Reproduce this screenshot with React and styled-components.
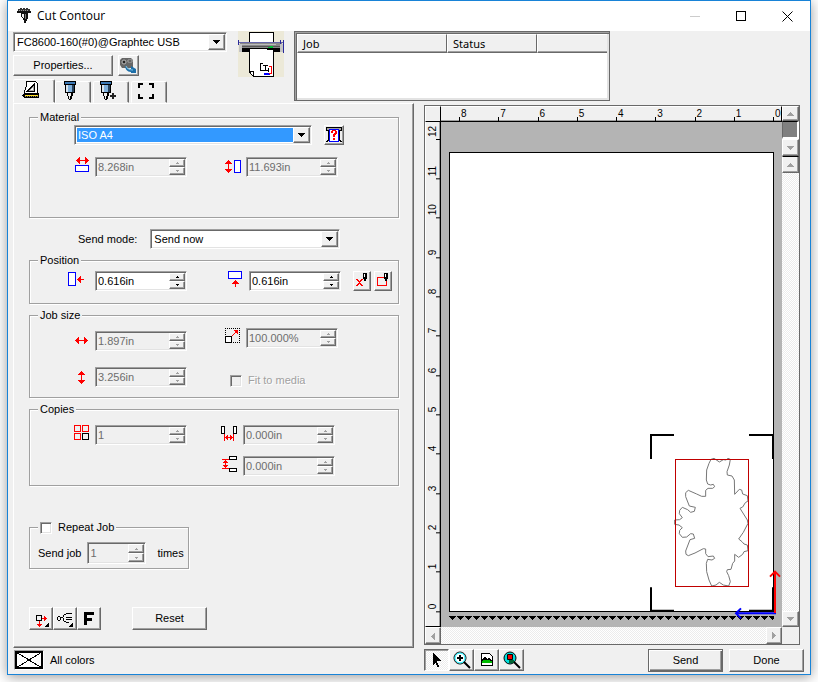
import React from "react";
import { useState } from "react";
import styled, { createGlobalStyle, css } from "styled-components";

const GlobalStyle = createGlobalStyle`
  * {
    box-sizing: border-box;
  }
  body {
    margin: 0;
    background-color: #fff;
  }
  body, button, input, select, table {
    font-family: "Liberation Sans", Arial, sans-serif;
    font-size: 11px;
    line-height: 13px;
    color: #000;
  }
  button, input, select {
    margin: 0;
    padding: 0;
    border-radius: 0;
  }
  svg {
    display: block;
    flex-shrink: 0;
  }
`;

const raised = css`
  background-color: #f0f0f0;
  border: 1px solid;
  border-color: #fff #696969 #696969 #fff;
  box-shadow: inset -1px -1px #a0a0a0;
`;
const sunken = css`
  border: 1px solid;
  border-color: #a0a0a0 #fff #fff #a0a0a0;
  box-shadow: inset 1px 1px #696969, inset -1px -1px #e3e3e3;
`;
const dither = css`
  background: repeating-conic-gradient(#fff 0 25%, #ececec 0 50%) 0 0 / 2px 2px;
`;

const Desktop = styled.div`
  display: flex;
  min-height: 100vh;
  padding: 0 7px 7px;
`;
const Window = styled.main`
  flex: 1;
  display: flex;
  flex-direction: column;
  background-color: #f0f0f0;
  border: 1px solid #1883d7;
  box-shadow: 0 2px 12px rgba(0, 0, 0, 0.4);
`;
const TitleBar = styled.header`
  display: flex;
  align-items: center;
  height: 30px;
  padding-left: 9px;
  background-color: #fff;
`;
const Title = styled.h1`
  flex: 1;
  margin: 0 0 0 5px;
  font: 12px/16px "Open Sans", "Noto Sans", sans-serif;
`;
const CaptionButton = styled.button`
  display: flex;
  align-items: center;
  justify-content: center;
  width: 46px;
  height: 30px;
  border: none;
  background: none;
`;

const Header = styled.section`
  display: flex;
  padding-left: 5px;
`;
const DeviceColumn = styled.div`
  display: flex;
  flex-direction: column;
  width: 214px;
  padding-top: 1px;
`;
const DeviceButtons = styled.div`
  display: flex;
  gap: 5px;
  margin: 3px 0;
`;
const PlotterBox = styled.div`
  margin: 0 10px 0 11px;
`;
const JobList = styled.div`
  width: 316px;
  height: 70px;
  padding: 2px;
  background-color: #fff;
  border: 1px solid #696969;
  box-shadow: inset 1px 1px #a0a0a0, inset 2px 2px #696969,
    inset -2px -2px #e3e3e3;
`;
const JobTable = styled.table`
  width: 100%;
  border-collapse: separate;
  border-spacing: 0;
  table-layout: fixed;
  th {
    height: 19px;
    padding: 0 5px;
    font: 11px/15px "Noto Sans", "Open Sans", sans-serif;
    text-align: left;
    background-color: #f0f0f0;
    border: 1px solid;
    border-color: #fff #696969 #696969 #fff;
    box-shadow: inset 0 -1px #a0a0a0;
  }
  th:last-child {
    border-right: none;
  }
`;

const Combo = styled.div`
  display: grid;
  grid-template-columns: 1fr 17px;
  width: ${(props) => props.$width}px;
  height: 20px;
  padding: 1px;
  background-color: #fff;
  ${sunken}
  select {
    grid-area: 1 / 1 / 2 / 3;
    appearance: none;
    padding-left: 1px;
    border: 1px solid #fff;
    outline: none;
    background-color: ${(props) => (props.$active ? "#3399ff" : "#fff")};
    color: ${(props) => (props.$active ? "#fff" : "#000")};
  }
`;
const ComboArrow = styled.span`
  grid-area: 1 / 2;
  display: flex;
  align-items: center;
  justify-content: center;
  pointer-events: none;
  ${raised}
`;

const Button = styled.button`
  width: ${(props) => props.$width || 75}px;
  height: ${(props) => props.$height || 23}px;
  ${raised}
  ${(props) =>
    props.$default &&
    css`
      border-color: #696969;
      box-shadow: inset 1px 1px #fff, inset -1px -1px #696969,
        inset -2px -2px #a0a0a0;
    `}
`;
const IconButton = styled(Button)`
  display: flex;
  align-items: center;
  justify-content: center;
  ${(props) =>
    props.$pressed &&
    css`
      border-color: #696969 #fff #fff #696969;
      box-shadow: inset 1px 1px #a0a0a0;
      ${dither}
    `}
`;

const TabList = styled.div`
  display: flex;
  align-items: flex-end;
  gap: 2px;
`;
const Tab = styled.button`
  display: flex;
  align-items: center;
  justify-content: center;
  width: ${(props) => (props.$active ? 42 : 36)}px;
  height: ${(props) => (props.$active ? 24 : 22)}px;
  margin-right: ${(props) => (props.$active ? -2 : 0)}px;
  padding: 0 6px 2px 0;
  background-color: #f0f0f0;
  border: 1px solid;
  border-color: #fff #696969 transparent #fff;
  border-radius: 2px 2px 0 0;
  box-shadow: inset -1px 0 #a0a0a0;
`;

const Main = styled.div`
  flex: 1;
  display: flex;
  gap: 10px;
  padding: 0 10px 0 5px;
`;
const Panel = styled.form`
  width: 401px;
  margin: 0;
  padding: 7px 14px 17px 15px;
  border: 1px solid;
  border-color: #fff #696969 #696969 #fff;
  box-shadow: inset -1px -1px #a0a0a0;
`;
const Group = styled.fieldset`
  min-width: 0;
  width: ${(props) => (props.$width ? `${props.$width}px` : "auto")};
  margin: ${(props) => props.$top || 0}px 0 0;
  padding: ${(props) => props.$pad};
  border: 1px solid #a0a0a0;
  box-shadow: 1px 1px #fff, inset 1px 1px #fff;
  legend {
    margin-left: 8px;
    padding: 0 2px;
    background-color: #f0f0f0;
  }
`;
const Columns = styled.div`
  display: grid;
  grid-template-columns: 157px ${(props) => props.$second || 151}px auto;
  align-items: start;
`;
const Column = styled.div`
  display: flex;
  flex-direction: column;
  align-items: flex-end;
  gap: ${(props) => props.$gap || 0}px;
  padding-top: ${(props) => props.$top || 0}px;
`;
const Field = styled.label`
  display: flex;
  align-items: center;
  gap: ${(props) => props.$gap || 5}px;
`;
const MediaRow = styled.div`
  display: flex;
  gap: 12px;
  padding-left: 44px;
  margin-bottom: 12px;
`;
const PenButtons = styled.div`
  display: flex;
  gap: 3px;
  padding-left: 12px;
`;
const SendMode = styled.label`
  display: flex;
  align-items: center;
  gap: 13px;
  margin: 11px 0 0 49px;
`;

const SpinBox = styled.span`
  display: flex;
  width: ${(props) => props.$width || 92}px;
  height: ${(props) => (props.$tall ? 22 : 20)}px;
  padding: 1px;
  background-color: ${(props) => (props.$disabled ? "#f0f0f0" : "#fff")};
  ${sunken}
  input {
    flex: 1;
    min-width: 0;
    padding-left: 1px;
    border: none;
    outline: none;
    background: none;
  }
  input:disabled {
    color: #6d6d6d;
  }
`;
const SpinButtons = styled.span`
  display: flex;
  flex-direction: column;
  width: 16px;
  button {
    flex: 1;
    display: flex;
    align-items: center;
    justify-content: center;
    ${raised}
  }
`;

const Check = styled.label`
  display: flex;
  align-items: center;
  gap: 6px;
  color: ${(props) => (props.$disabled ? "#a0a0a0" : "#000")};
  text-shadow: ${(props) => (props.$disabled ? "1px 1px #fff" : "none")};
  input {
    appearance: none;
    width: 12px;
    height: 12px;
    background-color: ${(props) => (props.$disabled ? "#f0f0f0" : "#fff")};
    ${sunken}
  }
  input:checked {
    background-image: linear-gradient(#000, #000);
    background-size: 4px 4px;
    background-position: center;
    background-repeat: no-repeat;
  }
`;
const FitRow = styled.div`
  align-self: stretch;
  padding: 10px 0 0 43px;
`;
const RepeatRow = styled.label`
  display: flex;
  align-items: center;
  gap: 6px;
  padding-left: 8px;
  span:last-child {
    margin-left: 5px;
  }
`;
const ActionRow = styled.div`
  display: flex;
  margin-top: 38px;
  button:last-child {
    margin-left: 31px;
  }
`;

const Preview = styled.section`
  flex: 1;
  display: grid;
  grid-template-columns: 16px 1fr 17px;
  grid-template-rows: 16px 1fr 17px;
  margin: 2px 0 3px;
  border: 1px solid #696969;
`;
const Corner = styled.div`
  border: 1px solid;
  border-color: #fff #000 #000 #fff;
`;
const HRuler = styled.div`
  display: flex;
  padding-left: 18px;
  font-size: 10px;
  border-top: 1px solid #fff;
  border-bottom: 1px solid #000;
  border-right: 1px solid #000;
  box-shadow: inset 0 -1px #a0a0a0;
`;
const HMark = styled.span`
  flex: ${(props) => (props.$last ? "0 0 8px" : 1)};
  padding-left: 2px;
  line-height: 14px;
  background: linear-gradient(#000, #000) 0 100% / 1px 4px no-repeat;
`;
const VRuler = styled.div`
  display: flex;
  flex-direction: column;
  padding-bottom: 14px;
  font-size: 10px;
  border-left: 1px solid #fff;
  border-bottom: 1px solid #000;
  border-right: 1px solid #000;
  box-shadow: inset -1px 0 #a0a0a0;
`;
const VMark = styled.span`
  flex: ${(props) => (props.$first ? "0 0 18px" : 1)};
  padding-top: 3px;
  line-height: 14px;
  writing-mode: vertical-rl;
  transform: rotate(180deg);
  background: linear-gradient(#000, #000) 0 0 / 4px 1px no-repeat;
`;
const Canvas = styled.div`
  position: relative;
  display: flex;
  flex-direction: column;
  padding: 30px 8px 7px;
  background-color: #b4b4b4;
`;
const Paper = styled.div`
  flex: 1;
  margin-bottom: 4px;
  background-color: #fff;
  border: 1px solid #000;
`;
const Design = styled.svg`
  position: absolute;
  right: 0;
  bottom: 5px;
`;
const VScroll = styled.div`
  grid-row: 1 / 3;
  grid-column: 3;
  display: flex;
  flex-direction: column;
`;
const HScroll = styled.div`
  grid-column: 1 / 3;
  display: flex;
`;
const Track = styled.div`
  flex: 1;
  ${dither}
`;
const Splitter = styled.div`
  height: 18px;
  background-color: #808080;
  border: 1px solid;
  border-color: #000 #fff #fff #696969;
  border-bottom-width: 2px;
  border-right-width: 2px;
`;
const ScrollEnd = styled(Button)`
  display: flex;
  align-items: center;
  justify-content: center;
  flex-shrink: 0;
  ${(props) => props.$ruled && "border-top-color: #000;"}
`;

const Footer = styled.footer`
  display: flex;
  align-items: center;
  gap: 6px;
  height: 26px;
  padding: 0 6px 2px;
`;
const ColorFilter = styled.div`
  display: flex;
  align-items: center;
  gap: 6px;
  flex: 0 0 404px;
`;
const Swatch = styled.span`
  ${sunken}
`;
const Tools = styled.div`
  flex: 1;
  display: flex;
`;

const Glyph = ({ w = 16, h = 16, children, ...rest }) => (
  <svg
    width={w}
    height={h}
    viewBox={`0 0 ${w} ${h}`}
    fill="none"
    shapeRendering="crispEdges"
    aria-hidden="true"
    {...rest}
  >
    {children}
  </svg>
);

const arrows = {
  down: "M0 0h7v1h-1v1h-1v1h-1v1h-1v-1h-1v-1h-1v-1h-1z",
  up: "M3 0h1v1h1v1h1v1h1v1h-7v-1h1v-1h1v-1h1z",
};
const turns = { left: "rotate(-90 4 4)", right: "rotate(90 4 4)" };
const ScrollArrow = ({ dir }) => (
  <Glyph w={8} h={8}>
    <g transform={turns[dir]}>
      <path
        d={arrows[dir] || arrows.up}
        transform="translate(0 2)"
        fill="#a0a0a0"
      />
    </g>
  </Glyph>
);
const TinyArrow = ({ up, color }) => (
  <Glyph w={3} h={2}>
    <path d={up ? "M1 0h1v1h1v1h-3v-1h1z" : "M0 0h3v1h-1v1h-1v-1h-1z"} fill={color} />
  </Glyph>
);

// double arrows, 13px long
const ARROW_H =
  "M0 3h1v-1h1v-1h1v-1h1v3h5v-3h1v1h1v1h1v1h1v1h-1v1h-1v1h-1v1h-1v-3h-5v3h-1v-1h-1v-1h-1v-1h-1z";
const ARROW_V =
  "M3 0h1v1h1v1h1v1h1v1h-3v5h3v1h-1v1h-1v1h-1v1h-1v-1h-1v-1h-1v-1h-1v-1h3v-5h-3v-1h1v-1h1v-1h1z";

const MediaWidthIcon = () => (
  <Glyph w={15} h={20}>
    <path d={ARROW_H} fill="#f00" transform="translate(1 0)" />
    <path d="M.5 8.500h13v6h-13z" fill="#fff" stroke="#00f" />
  </Glyph>
);
const MediaHeightIcon = () => (
  <Glyph w={16} h={14}>
    <path d={ARROW_V} fill="#f00" />
    <path d="M9.500.5h6v12h-6z" fill="#fff" stroke="#00f" />
  </Glyph>
);
const OffsetXIcon = () => (
  <Glyph w={17} h={18}>
    <path d="M.5.5h7v13h-7z" fill="#fff" stroke="#00f" />
    <path d="M9 7h1v-1h1v-1h1v-1h1v3h3v1h-3v3h-1v-1h-1v-1h-1v-1h-1z" fill="#f00" />
  </Glyph>
);
const OffsetYIcon = () => (
  <Glyph w={15} h={20}>
    <path d="M.5.5h13v7h-13z" fill="#fff" stroke="#00f" />
    <path d="M7 9h1v1h1v1h1v1h1v1h-3v3h-1v-3h-3v-1h1v-1h1v-1h1z" fill="#f00" />
  </Glyph>
);
const SizeXIcon = () => (
  <Glyph w={14} h={8}>
    <path d={ARROW_H} fill="#f00" />
  </Glyph>
);
const SizeYIcon = () => (
  <Glyph w={11} h={13}>
    <path d={ARROW_V} fill="#f00" />
  </Glyph>
);
const ScaleIcon = () => (
  <Glyph w={15} h={20}>
    <path d="M0 .5h15M14.500 0v15M15 14.500h-8M.5 0v8" stroke="#000" strokeDasharray="1 1" />
    <path d="M.5 8.500h6v6h-6z" fill="#fff" stroke="#000" />
    <path d="M7 7h1v1h-1zM8 6h1v1h-1zM9 5h1v1h-1zM10 4h1v1h-1z" fill="#f00" />
    <path d="M9 2h4v4h-1v-1h-1v-1h-1v-1h-1z" fill="#f00" />
  </Glyph>
);
const CopiesIcon = () => (
  <Glyph w={16} h={20}>
    <path d="M.5.5h6v6h-6zM8.500.5h6v6h-6zM.5 8.500h6v6h-6z" stroke="#f00" />
    <path d="M8.500 8.500h6v6h-6z" stroke="#000" />
  </Glyph>
);
const GapXIcon = () => (
  <Glyph w={17} h={18}>
    <path d="M.5.5h3v7h-3zM12.500.5h3v7h-3z" fill="#fff" stroke="#000" />
    <path d="M3.500 8v7M12.500 8v7M5 11.500h7" stroke="#f00" />
    <path d="M4 11h1v-1h1v-1h1v5h-1v-1h-1v-1h-1zM12 11h-1v-1h-1v-1h-1v5h1v-1h1v-1h1z" fill="#f00" />
  </Glyph>
);
const GapYIcon = () => (
  <Glyph w={16} h={20}>
    <path d="M7.500.5h7v3h-7zM7.500 12.500h7v3h-7z" fill="#fff" stroke="#000" />
    <path d="M0 3.500h7M0 12.500h7M3.500 5v7" stroke="#f00" />
    <path d="M3 4h1v1h1v1h1v1h-5v-1h1v-1h1zM3 12h1v-1h1v-1h1v-1h-5v1h1v1h1z" fill="#f00" />
  </Glyph>
);
const MediaQueryIcon = () => (
  <Glyph w={16} h={16}>
    <path d="M0 .5h16M0 3.500h16M.5 0v4M15.500 0v4M2.500 4v9l-2 2M13.500 4v9l2 2" stroke="#000" />
    <path d="M1 1h14v2h-14z" fill="#a0a0a0" />
    <path d="M3.500 2.500h9v12h-9z" fill="#fff" stroke="#00f" />
    <path d="M5 4h1v-1h4v1h1v3h-1v1h-1v2h-2v-3h1v-1h1v-2h-2v2h-2zM7 11h2v2h-2z" fill="#f00" />
  </Glyph>
);
const PenHead = () => (
  <>
    <path d="M8 0h4v6h-1v2h-2v-2h-1z" fill="#000" />
    <path d="M9.500 1v3" stroke="#fff" />
  </>
);
const PenClearIcon = () => (
  <Glyph w={14} h={16}>
    <path
      d="M1 6h2v1h1v1h1v-1h1v-1h2v1h-1v1h-1v1h-1v1h1v1h1v1h1v1h-2v-1h-1v-1h-1v1h-1v1h-2v-1h1v-1h1v-1h1v-1h-1v-1h-1v-1h-1z"
      fill="#f00"
    />
    <PenHead />
  </Glyph>
);
const PenAreaIcon = () => (
  <Glyph w={14} h={16}>
    <path d="M1.500 4.500h9v8h-9z" stroke="#f00" />
    <PenHead />
  </Glyph>
);
const BladeIcon = () => (
  <Glyph w={15} h={16}>
    <path d="M1 1h2v-1h2v1h1v-1h2v1h1v-1h2v1h2v3h-12z" fill="#333" />
    <path d="M2 2.500h10" stroke="#999" strokeDasharray="1 1" />
    <path d="M0 3h14v2h-3v6h-1v2h-1v2h-2v-3h-1v-2h-1v-1h-1v-4h-4z" fill="#111" />
    <path d="M5 6h2v4h-1v-1h-1z" fill="#eee" />
    <path d="M8 6h1v5h-1z" fill="#777" />
  </Glyph>
);
const RefreshDeviceIcon = () => (
  <Glyph w={17} h={17} shapeRendering="auto">
    <path d="M0 3l2-2h9l2 2v8h-11l-2-3z" fill="#666" />
    <circle cx="4" cy="5" r="2" fill="#222" stroke="#bbb" />
    <path d="M8 3h4v2h-4z" fill="#222" stroke="#aaa" />
    <path d="M5 8c1 3 3 4 6 4v-3l5 3v4h-5v-1c-4 0-6-3-6-7z" fill="#1d6fa8" />
    <path d="M6 9c1 3 4 4 7 4" stroke="#7cc4e8" strokeWidth="1" />
  </Glyph>
);
const TabMaterialIcon = () => (
  <Glyph w={18} h={18}>
    <path d="M5 0h9l2 2v11h-13l2-7z" fill="#fff" />
    <path d="M5 .5h9M14.500 1v1M15.500 2v11M4.500 0v6M3.500 6v3M2.500 9v3" stroke="#000" />
    <path d="M13 2v9h-9v-1h1v-1h1v-1h1v-1h1v-1h1v-1h1v-1h1v-1h1v-1z" fill="#000" />
    <path d="M12 5v5h-5v-1h1v-1h1v-1h1v-1h1v-1z" fill="#aaa" />
    <path d="M9 9h2v-2h-1v1h-1z" fill="#fff" />
    <path d="M0 14h1v-1h1v-1h15v5h-15v-1h-1v-1h-1z" fill="#000" />
    <path d="M3 14.500h13" stroke="#fd2" strokeWidth="1" />
    <path d="M3 15.500h13" stroke="#886" strokeDasharray="1 1" />
  </Glyph>
);
const PenShape = () => (
  <>
    <path d="M0 0h12v4h-1v8h-2v3h-1v3h-1v1h-2v-1h-1v-3h-1v-3h-2v-8h-1z" fill="#000" />
    <path d="M1 1h10v2h-10z" fill="#3b78b5" />
    <path d="M2 4h2v7h-2z" fill="#d8e4ee" />
    <path d="M4 4h4v7h-4z" fill="#7fb0dc" />
    <path d="M8 4h2v7h-2z" fill="#27415a" />
    <path d="M4 12h3v3h-1v3h-1v-3h-1z" fill="#eee" />
  </>
);
const TabPenIcon = () => (
  <Glyph w={13} h={20}>
    <PenShape />
  </Glyph>
);
const TabPenAddIcon = () => (
  <Glyph w={17} h={20}>
    <PenShape />
    <path d="M10 14.500h6M13 12v6" stroke="#222" strokeWidth="2" />
  </Glyph>
);
const TabMarksIcon = () => (
  <Glyph w={16} h={16}>
    <path d="M1 5v-4h4M11 1h4v4M15 11v4h-4M5 15h-4v-4" stroke="#000" strokeWidth="2" />
  </Glyph>
);
const PlotterIcon = () => (
  <Glyph w={46} h={46}>
    <path d="M0 0h46v46h-46z" fill="#ece9d8" />
    <path d="M11.500 1.500h24v10h-24z" fill="#fff" stroke="#000" />
    <path d="M3 17h41v4h-41z" fill="#000" />
    <path d="M2 11h42v6h-42z" fill="#888" />
    <path d="M4 13.500h34" stroke="#bbb" />
    <path d="M4 15.500h38" stroke="#555" />
    <path d="M0 11.500h46" stroke="#66a" />
    <path d="M1 13h3v8h-3zM42 13h3v8h-3z" fill="#c4c4c4" />
    <path d="M.5 9v5M45.500 9v13M42.500 9v4" stroke="#2a2a9a" />
    <path d="M30 16.500h5M32 15.500h3" stroke="#0b3" />
    <path d="M11 18h25v28h-21l-4-4z" fill="#fff" />
    <path d="M11.500 18v23l4 4.500h20v-27.500M11.500 40.500h4v5" stroke="#000" />
    <path d="M29 18.500h6" stroke="#000" />
    <path d="M22.500 32v8M22 32.500h3M25 34.500h5M27.500 34v5M22 39.500h9M30.500 37v4" stroke="#000" />
    <path d="M26 43h6" stroke="#00f" strokeWidth="2" />
    <path d="M33.500 35v8M31 35.500h3M31 42.500h2" stroke="#f00" />
  </Glyph>
);
const MenuMark = () => <path d="M17 14v4h-4v-1h1v-1h1v-1h1v-1z" fill="#000" />;
const OriginIcon = () => (
  <Glyph w={18} h={20}>
    <path d="M4.500 6.500h5v5h-5z" stroke="#000" />
    <path d="M10 9.500h3M7.500 12v3" stroke="#f00" />
    <path d="M12 7h1v1h1v1h1v1h-1v1h-1v1h-1zM5 15h5v1h-1v1h-1v1h-1v-1h-1v-1h-1z" fill="#f00" />
    <MenuMark />
  </Glyph>
);
const OrderIcon = () => (
  <Glyph w={18} h={20}>
    <path
      d="M1 8h1v-1h2v1h1v3h-1v1h-2v-1h-1zM2 8v3h2v-3z"
      fill="#000"
      fillRule="evenodd"
    />
    <path d="M5 8.500h2M7.500 8v-2M8 5.500h2M10 4.500h6M10 8.500h6M7.500 9v3M8 12.500h2M10 13.500h3M10 10.500h6" stroke="#000" />
    <MenuMark />
  </Glyph>
);
const FlipIcon = () => (
  <Glyph w={10} h={14}>
    <path d="M1.500 13v-12M0 1.500h10M0 7h8" stroke="#000" strokeWidth="3" />
  </Glyph>
);
const NoColorIcon = () => (
  <Glyph w={28} h={18}>
    <path d="M1 1h26v16h-26z" fill="#fff" stroke="#000" strokeWidth="2" />
    <path d="M1 1l26 16M27 1l-26 16" stroke="#000" />
  </Glyph>
);
const PointerIcon = () => (
  <Glyph w={12} h={16}>
    <path
      d="M2 1h1v1h1v1h1v1h1v1h1v1h1v1h1v1h1v1h-4v2h1v2h1v2h-2v-2h-1v-2h-1v1h-1v1h-1z"
      fill="#000"
    />
  </Glyph>
);
const ZoomInIcon = () => (
  <Glyph w={18} h={18} shapeRendering="auto">
    <circle cx="7" cy="7" r="6" fill="#fff" stroke="#000" />
    <circle cx="7" cy="7" r="5" stroke="#0ef" strokeWidth="1" />
    <path d="M4 7h6M7 4v6M11 11l6 6" stroke="#000" strokeWidth="2" />
  </Glyph>
);
const FitPageIcon = () => (
  <Glyph w={14} h={16}>
    <path d="M1.500 1.500h8l3 3v9h-11z" fill="#fff" stroke="#000" />
    <path d="M2 8h10v3h-10z" fill="#0b0" />
    <path d="M2 7h1v-1h1v-1h2v1h1v1h1v-1h2v1h1v1h1v1h-2v-1h-7v1h-1z" fill="#000" />
  </Glyph>
);
const ZoomDesignIcon = () => (
  <Glyph w={18} h={18} shapeRendering="auto">
    <circle cx="7" cy="7" r="6" fill="#0dd" stroke="#000" />
    <path d="M4.500 3.500h5v5h-5z" fill="#e00" stroke="#000" />
    <path d="M6 9h5v3h-5z" fill="#063" />
    <path d="M11 11l6 6" stroke="#000" strokeWidth="2" />
  </Glyph>
);

const Spinner = ({ value, disabled, width, tall, label }) => {
  const [text, setText] = useState(value);
  const color = disabled ? "#a0a0a0" : "#000";
  const step = (delta) => {
    const unit = text.replace(/[\d.]/g, "");
    const digits = (text.split(".")[1] || "").replace(/\D/g, "").length;
    setText((parseFloat(text) + delta).toFixed(digits) + unit);
  };
  return (
    <SpinBox $disabled={disabled} $width={width} $tall={tall}>
      <input
        aria-label={label}
        value={text}
        disabled={disabled}
        onChange={(e) => setText(e.target.value)}
      />
      <SpinButtons>
        <button
          type="button"
          disabled={disabled}
          aria-label={`${label} up`}
          onClick={() => step(0.1)}
        >
          <TinyArrow up color={color} />
        </button>
        <button
          type="button"
          disabled={disabled}
          aria-label={`${label} down`}
          onClick={() => step(-0.1)}
        >
          <TinyArrow color={color} />
        </button>
      </SpinButtons>
    </SpinBox>
  );
};

const ComboBox = ({ value, width, active, label }) => (
  <Combo $width={width} $active={active}>
    <select aria-label={label} defaultValue={value}>
      <option>{value}</option>
    </select>
    <ComboArrow>
      <Glyph w={7} h={4}>
        <path d={arrows.down} fill="#000" />
      </Glyph>
    </ComboArrow>
  </Combo>
);

const tabs = [
  { name: "Material", icon: <TabMaterialIcon /> },
  { name: "Tool", icon: <TabPenIcon /> },
  { name: "Tool options", icon: <TabPenAddIcon /> },
  { name: "Registration marks", icon: <TabMarksIcon /> },
];

const DeviceHeader = () => {
  const [tab, setTab] = useState(0);
  return (
    <Header>
      <DeviceColumn>
        <ComboBox label="Device" value="FC8600-160(#0)@Graphtec USB" width={214} />
        <DeviceButtons>
          <Button type="button" $width={100} $height={21}>
            Properties...
          </Button>
          <IconButton type="button" aria-label="Refresh device" $width={21} $height={21}>
            <RefreshDeviceIcon />
          </IconButton>
        </DeviceButtons>
        <TabList role="tablist">
          {tabs.map((item, index) => (
            <Tab
              key={item.name}
              type="button"
              role="tab"
              aria-label={item.name}
              aria-selected={index === tab}
              $active={index === tab}
              onClick={() => setTab(index)}
            >
              {item.icon}
            </Tab>
          ))}
        </TabList>
      </DeviceColumn>
      <PlotterBox>
        <PlotterIcon />
      </PlotterBox>
      <JobList>
        <JobTable>
          <colgroup>
            <col width="150" />
            <col width="90" />
            <col />
          </colgroup>
          <thead>
            <tr>
              <th>Job</th>
              <th>Status</th>
              <th></th>
            </tr>
          </thead>
        </JobTable>
      </JobList>
    </Header>
  );
};

const Settings = () => (
  <Panel onSubmit={(e) => e.preventDefault()}>
    <Group $pad="1px 0 40px">
      <legend>Material</legend>
      <MediaRow>
        <ComboBox label="Material" value="ISO A4" width={238} active />
        <IconButton type="button" aria-label="Query media" $width={20} $height={20}>
          <MediaQueryIcon />
        </IconButton>
      </MediaRow>
      <Columns>
        <Column>
          <Field>
            <MediaWidthIcon />
            <Spinner label="Media width" value="8.268in" disabled />
          </Field>
        </Column>
        <Column>
          <Field>
            <MediaHeightIcon />
            <Spinner label="Media height" value="11.693in" disabled />
          </Field>
        </Column>
      </Columns>
    </Group>
    <SendMode>
      Send mode:
      <ComboBox label="Send mode" value="Send now" width={190} />
    </SendMode>
    <Group $top={5} $pad="4px 0 12px">
      <legend>Position</legend>
      <Columns $second={154}>
        <Column>
          <Field $gap={10}>
            <OffsetXIcon />
            <Spinner label="Position x" value="0.616in" />
          </Field>
        </Column>
        <Column>
          <Field $gap={6}>
            <OffsetYIcon />
            <Spinner label="Position y" value="0.616in" />
          </Field>
        </Column>
        <PenButtons>
          <IconButton type="button" aria-label="Clear origin" $width={18} $height={20}>
            <PenClearIcon />
          </IconButton>
          <IconButton type="button" aria-label="Trace area" $width={18} $height={20}>
            <PenAreaIcon />
          </IconButton>
        </PenButtons>
      </Columns>
    </Group>
    <Group $top={5} $pad="6px 0 10px">
      <legend>Job size</legend>
      <Columns>
        <Column $gap={16} $top={3}>
          <Field $gap={6}>
            <SizeXIcon />
            <Spinner label="Job width" value="1.897in" disabled />
          </Field>
          <Field $gap={6}>
            <SizeYIcon />
            <Spinner label="Job height" value="3.256in" disabled />
          </Field>
        </Column>
        <Column $gap={16}>
          <Field $gap={6}>
            <ScaleIcon />
            <Spinner label="Scale" value="100.000%" disabled />
          </Field>
          <FitRow>
            <Check $disabled>
              <input type="checkbox" disabled />
              Fit to media
            </Check>
          </FitRow>
        </Column>
      </Columns>
    </Group>
    <Group $top={5} $pad="9px 0 9px">
      <legend>Copies</legend>
      <Columns $second={148}>
        <Column>
          <Field>
            <CopiesIcon />
            <Spinner label="Copies" value="1" disabled />
          </Field>
        </Column>
        <Column $gap={11}>
          <Field>
            <GapXIcon />
            <Spinner label="Horizontal gap" value="0.000in" disabled />
          </Field>
          <Field>
            <GapYIcon />
            <Spinner label="Vertical gap" value="0.000in" disabled />
          </Field>
        </Column>
      </Columns>
    </Group>
    <Group $top={35} $width={160} $pad="8px 0 4px">
      <legend>
        <Check>
          <input type="checkbox" />
          Repeat Job
        </Check>
      </legend>
      <RepeatRow>
        <span>Send job</span>
        <Spinner label="Send job times" value="1" width={59} tall disabled />
        <span>times</span>
      </RepeatRow>
    </Group>
    <ActionRow>
      <IconButton type="button" aria-label="Origin" $width={24}>
        <OriginIcon />
      </IconButton>
      <IconButton type="button" aria-label="Cutting order" $width={24}>
        <OrderIcon />
      </IconButton>
      <IconButton type="button" aria-label="Orientation" $width={24}>
        <FlipIcon />
      </IconButton>
      <Button type="reset">Reset</Button>
    </ActionRow>
  </Panel>
);

const horizontalMarks = [8, 7, 6, 5, 4, 3, 2, 1, 0];
const verticalMarks = [12, 11, 10, 9, 8, 7, 6, 5, 4, 3, 2, 1, 0];

const CONTOUR =
  "M213 103L207 115 200 135 199 165 203 177 212 180 220 178 224 185 218 190 204 190 197 196 197 214 185 214 170 207 145 196 137 203 137 215 148 243 166 247 163 259 152 262 143 254 127 247 119 256 118 266 127 278 119 284 104 285 104 298 117 300 127 308 119 316 118 326 127 337 140 336 152 326 160 327 164 340 150 344 137 378 138 388 145 392 165 384 190 371 197 372 197 386 204 395 220 393 224 400 216 405 203 403 199 415 200 440 207 465 215 483 228 480 238 472 250 480 266 483 271 470 266 452 260 440 262 434 273 433 278 415 284 408 284 388 296 397 308 388 312 380 324 377 322 360 312 357 306 350 296 342 310 322 324 295 322 285 300 250 308 246 316 233 324 228 322 212 308 207 305 195 298 193 284 208 283 165 276 153 262 150 261 140 268 120 271 103 264 100 258 105 250 104 238 111 228 104 222 100z";

const CutPreview = () => (
  <Preview aria-label="Preview">
    <Corner />
    <HRuler>
      {horizontalMarks.map((mark) => (
        <HMark key={mark} $last={mark === 0}>
          {mark}
        </HMark>
      ))}
    </HRuler>
    <VRuler>
      {verticalMarks.map((mark) => (
        <VMark key={mark} $first={mark === 12}>
          {mark}
        </VMark>
      ))}
    </VRuler>
    <Canvas>
      <Paper />
      <svg width="100%" height="4" shapeRendering="crispEdges" aria-hidden="true">
        <pattern id="feed" width="8" height="4" patternUnits="userSpaceOnUse">
          <path d="M0 0h7v1h-1v1h-1v1h-1v1h-1v-1h-1v-1h-1v-1h-1z" fill="#000" />
        </pattern>
        <rect width="100%" height="4" fill="url(#feed)" />
      </svg>
      <Design width="132" height="192" viewBox="30 15 396 576" fill="none" aria-hidden="true">
        <path
          d="M33 102V30H102M327 30H399V102M33 487V557H102M327 557H399V487"
          stroke="#000"
          strokeWidth="6"
        />
        <path d={CONTOUR} stroke="#777" strokeWidth="3" />
        <path
          d="M106.500 103.500h219v381h-219z"
          stroke="#c00000"
          strokeWidth="3"
          shapeRendering="crispEdges"
        />
        <path d="M408 565H288M303 550L288 565 303 580" stroke="#00f" strokeWidth="6" />
        <path d="M405 564V440M390 455L405 440 420 455" stroke="#f00" strokeWidth="6" />
      </Design>
    </Canvas>
    <VScroll>
      <ScrollEnd type="button" aria-label="Split up" $width={17} $height={15}>
        <ScrollArrow dir="up" />
      </ScrollEnd>
      <Splitter />
      <ScrollEnd type="button" aria-label="Split down" $width={17} $height={17}>
        <ScrollArrow dir="down" />
      </ScrollEnd>
      <ScrollEnd type="button" aria-label="Scroll up" $width={17} $height={17} $ruled>
        <ScrollArrow dir="up" />
      </ScrollEnd>
      <Track />
      <ScrollEnd type="button" aria-label="Scroll down" $width={17} $height={16}>
        <ScrollArrow dir="down" />
      </ScrollEnd>
    </VScroll>
    <HScroll>
      <ScrollEnd type="button" aria-label="Scroll left" $width={16} $height={17}>
        <ScrollArrow dir="left" />
      </ScrollEnd>
      <Track />
      <ScrollEnd type="button" aria-label="Scroll right" $width={16} $height={17}>
        <ScrollArrow dir="right" />
      </ScrollEnd>
    </HScroll>
  </Preview>
);

const App = () => {
  const [tool, setTool] = useState("select");
  const tools = [
    { name: "select", icon: <PointerIcon /> },
    { name: "zoom in", icon: <ZoomInIcon /> },
    { name: "fit page", icon: <FitPageIcon /> },
    { name: "zoom to design", icon: <ZoomDesignIcon /> },
  ];
  return (
    <Desktop>
      <GlobalStyle />
      <Window>
        <TitleBar>
          <BladeIcon />
          <Title>Cut Contour</Title>
          <CaptionButton type="button" aria-label="Minimize" disabled>
            <Glyph w={11} h={11}>
              <path d="M0 5.500h10" stroke="#ccc" />
            </Glyph>
          </CaptionButton>
          <CaptionButton type="button" aria-label="Maximize">
            <Glyph w={11} h={11}>
              <path d="M.5.5h9v9h-9z" stroke="#000" />
            </Glyph>
          </CaptionButton>
          <CaptionButton type="button" aria-label="Close">
            <Glyph w={11} h={11} shapeRendering="auto">
              <path d="M.5.5l10 10M10.500.5l-10 10" stroke="#000" />
            </Glyph>
          </CaptionButton>
        </TitleBar>
        <DeviceHeader />
        <Main>
          <Settings />
          <CutPreview />
        </Main>
        <Footer>
          <ColorFilter>
            <Swatch>
              <NoColorIcon />
            </Swatch>
            All colors
          </ColorFilter>
          <Tools>
            {tools.map((item) => (
              <IconButton
                key={item.name}
                type="button"
                aria-label={item.name}
                $width={25}
                $height={22}
                $pressed={item.name === tool}
                onClick={() => setTool(item.name)}
              >
                {item.icon}
              </IconButton>
            ))}
          </Tools>
          <Button type="button" $default>
            Send
          </Button>
          <Button type="button">Done</Button>
        </Footer>
      </Window>
    </Desktop>
  );
};

export default App;
